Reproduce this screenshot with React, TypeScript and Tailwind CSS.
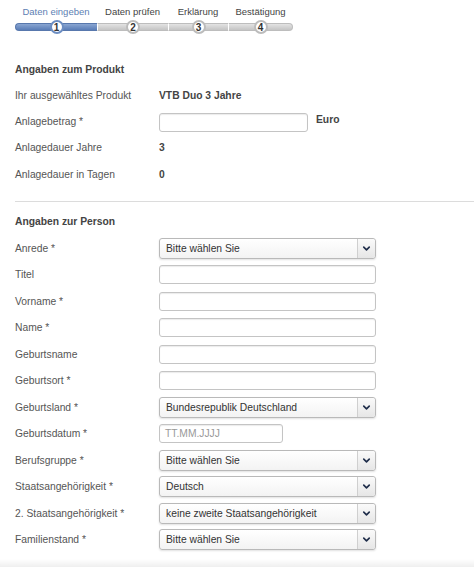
import { ChevronDown } from "lucide-react";

const steps = [
  { label: "Daten eingeben", w: "w-[82px]", active: true },
  { label: "Daten prüfen", w: "w-[71px]", active: false },
  { label: "Erklärung", w: "w-[60px]", active: false },
  { label: "Bestätigung", w: "w-[65px]", active: false },
];

function TextInput({ width = "w-[217px]", placeholder }: { width?: string; placeholder?: string }) {
  return (
    <div
      className={`${width} h-[19px] rounded-[3px] border border-[#c4c4c4] bg-white shadow-[inset_0_1px_1px_rgba(0,0,0,0.08)] flex items-center px-[5px] text-[10.3px] text-[#999]`}
    >
      {placeholder}
    </div>
  );
}

function Select({ value }: { value: string }) {
  return (
    <div className="w-[217px] h-[21px] rounded-[3px] border border-[#b9b9b9] bg-gradient-to-b from-white to-[#f3f3f3] shadow-[0_1px_2px_rgba(0,0,0,0.12)] flex items-center">
      <span className="flex-1 pl-[6px] text-[10.3px] text-[#333]">{value}</span>
      <span className="w-[18px] h-full border-l border-[#cfcfcf] bg-gradient-to-b from-[#fafafa] to-[#e6e6e6] rounded-r-[3px] flex items-center justify-center">
        <ChevronDown size={11} strokeWidth={3.5} className="text-[#1f2d4a]" />
      </span>
    </div>
  );
}

function Row({ label, children, h = "h-[26.5px]" }: { label: string; children?: React.ReactNode; h?: string }) {
  return (
    <div className={`flex items-center ${h}`}>
      <div className="w-[144px] shrink-0 text-[10.3px] text-[#555]">{label}</div>
      {children}
    </div>
  );
}

export default function App() {
  return (
    <div
      className="w-[474px] h-[567px] bg-white overflow-hidden flex flex-col"
      style={{ fontFamily: '"Liberation Sans", Arial, sans-serif' }}
    >
      {/* Stepper */}
      <div className="flex pl-[15px] pt-[5px]">
        {steps.map((s, i) => (
          <div key={s.label} className={`${s.w} flex flex-col items-center`}>
            <div className={`h-[14px] leading-[14px] text-[9.5px] ${s.active ? "text-[#5d80b3]" : "text-[#444]"}`}>
              {s.label}
            </div>
            <div
              className={`mt-[4px] w-full h-[8px] flex items-center justify-center border-y ${
                s.active
                  ? "bg-gradient-to-b from-[#8aa6d2] to-[#5a7db6] border-[#5878ad]"
                  : "bg-gradient-to-b from-[#e3e3e3] to-[#c4c4c4] border-[#bdbdbd]"
              } ${i === 0 ? "rounded-l-full border-l" : "border-l border-l-white"} ${i === 3 ? "rounded-r-full border-r" : ""}`}
            >
              <div
                className={`w-[14px] h-[14px] shrink-0 rounded-full bg-white border-2 ${
                  s.active ? "border-[#6d8ec2]" : "border-[#bcbcbc]"
                } flex items-center justify-center text-[10px] font-bold text-[#333]`}
              >
                {i + 1}
              </div>
            </div>
          </div>
        ))}
      </div>

      {/* Produkt */}
      <div className="px-[15px] mt-[26px]">
        <div className="h-[26px] flex items-center text-[10.3px] font-bold text-[#444]">Angaben zum Produkt</div>
        <Row label="Ihr ausgewähltes Produkt" h="h-[26px]">
          <span className="text-[10.3px] font-bold text-[#444]">VTB Duo 3 Jahre</span>
        </Row>
        <Row label="Anlagebetrag *" h="h-[26px]">
          <TextInput width="w-[149px]" />
          <span className="ml-[8px] text-[10.3px] font-bold text-[#444] -mt-[4px]">Euro</span>
        </Row>
        <Row label="Anlagedauer Jahre" h="h-[26px]">
          <span className="text-[10.3px] font-bold text-[#444]">3</span>
        </Row>
        <Row label="Anlagedauer in Tagen" h="h-[27px]">
          <span className="text-[10.3px] font-bold text-[#444]">0</span>
        </Row>
      </div>

      <div className="ml-[15px] mt-[13px] border-t border-[#dcdcdc]" />

      {/* Person */}
      <div className="px-[15px] mt-[7px] flex-1">
        <div className="h-[26px] flex items-center text-[10.3px] font-bold text-[#444]">Angaben zur Person</div>
        <Row label="Anrede *">
          <Select value="Bitte wählen Sie" />
        </Row>
        <Row label="Titel">
          <TextInput />
        </Row>
        <Row label="Vorname *">
          <TextInput />
        </Row>
        <Row label="Name *">
          <TextInput />
        </Row>
        <Row label="Geburtsname">
          <TextInput />
        </Row>
        <Row label="Geburtsort *">
          <TextInput />
        </Row>
        <Row label="Geburtsland *">
          <Select value="Bundesrepublik Deutschland" />
        </Row>
        <Row label="Geburtsdatum *">
          <TextInput width="w-[124px]" placeholder="TT.MM.JJJJ" />
        </Row>
        <Row label="Berufsgruppe *">
          <Select value="Bitte wählen Sie" />
        </Row>
        <Row label="Staatsangehörigkeit *">
          <Select value="Deutsch" />
        </Row>
        <Row label="2. Staatsangehörigkeit *">
          <Select value="keine zweite Staatsangehörigkeit" />
        </Row>
        <Row label="Familienstand *">
          <Select value="Bitte wählen Sie" />
        </Row>
      </div>

      <div className="h-[8px] bg-gradient-to-b from-white to-[#efefef]" />
    </div>
  );
}
